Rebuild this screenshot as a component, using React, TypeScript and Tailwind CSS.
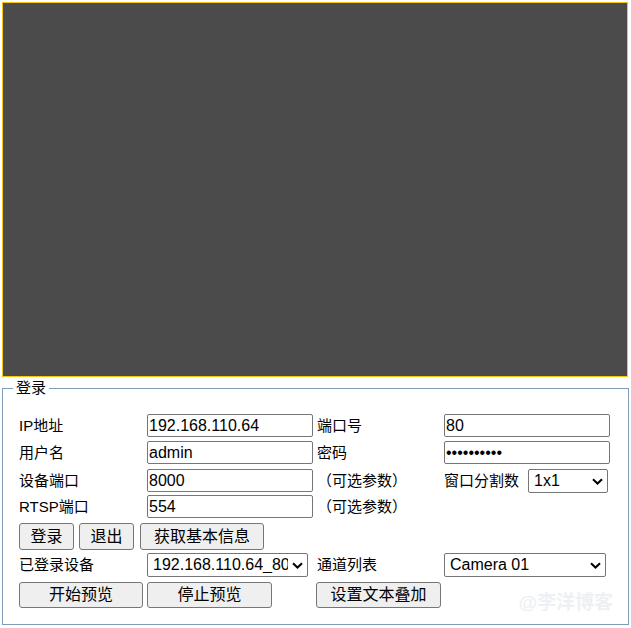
import type { ReactNode } from "react";

const FONT = "font-['Liberation_Sans','Noto_Sans_CJK_SC',sans-serif]";

function Field({ value, type = "text" }: { value: string; type?: string }) {
  return (
    <input
      type={type}
      defaultValue={value}
      readOnly
      className="h-[23px] w-[166px] rounded-[2px] border border-[#767676] bg-white pl-[1px] text-[16px] leading-none text-black outline-none"
    />
  );
}

function Sel({ w, value }: { w: string; value: string }) {
  return (
    <div className={`relative h-[24px] ${w}`}>
      <select
        defaultValue={value}
        className="h-full w-full appearance-none rounded-[2px] border border-[#767676] bg-white pl-[5px] pr-[19px] text-[16px] leading-none text-black outline-none"
      >
        <option>{value}</option>
      </select>
      <svg
        className="pointer-events-none absolute right-[5px] top-[9px]"
        width="11"
        height="7"
        viewBox="0 0 11 7"
      >
        <path d="M1 1.2l4.5 4.3L10 1.2" stroke="#000" strokeWidth="2" fill="none" />
      </svg>
    </div>
  );
}

function Btn({ w, children }: { w: string; children: ReactNode }) {
  return (
    <button
      className={`h-full rounded-[3px] border border-[#767676] bg-[#efefef] text-[16px] leading-none text-black ${w}`}
    >
      {children}
    </button>
  );
}

function Label({ children }: { children: ReactNode }) {
  return <span className="text-[15px] leading-none">{children}</span>;
}

export default function App() {
  return (
    <div className={`p-[2px] text-black ${FONT}`}>
      <div className="h-[375px] w-[626px] border border-[#f6c413] bg-[#4b4b4b]" />

      <fieldset className="relative w-[627px] border border-[#7f9db9] px-0 pb-[16px]">
        <legend className="ml-[10px] px-[3px] text-[15px] leading-[22px]">登录</legend>

        <div className="flex flex-col pl-[16px] pt-[15px]">
          <div className="flex h-[23px] items-center">
            <div className="w-[128px]"><Label>IP地址</Label></div>
            <div className="w-[170px]"><Field value="192.168.110.64" /></div>
            <div className="w-[127px]"><Label>端口号</Label></div>
            <Field value="80" />
          </div>

          <div className="mt-[4px] flex h-[23px] items-center">
            <div className="w-[128px]"><Label>用户名</Label></div>
            <div className="w-[170px]"><Field value="admin" /></div>
            <div className="w-[127px]"><Label>密码</Label></div>
            <Field value="abcd123456" type="password" />
          </div>

          <div className="mt-[4px] flex h-[25px] items-center">
            <div className="w-[128px]"><Label>设备端口</Label></div>
            <div className="w-[170px]"><Field value="8000" /></div>
            <div className="w-[127px]"><Label>（可选参数）</Label></div>
            <div className="w-[84px]"><Label>窗口分割数</Label></div>
            <Sel w="w-[80px]" value="1x1" />
          </div>

          <div className="mt-[2px] flex h-[23px] items-center">
            <div className="w-[128px]"><Label>RTSP端口</Label></div>
            <div className="w-[170px]"><Field value="554" /></div>
            <div className="w-[127px]"><Label>（可选参数）</Label></div>
          </div>

          <div className="mt-[5px] flex h-[27px] items-stretch gap-[5px]">
            <Btn w="w-[55px]">登录</Btn>
            <Btn w="w-[55px]">退出</Btn>
            <Btn w="ml-[1px] w-[124px]">获取基本信息</Btn>
          </div>

          <div className="mt-[3px] flex h-[24px] items-center">
            <div className="w-[128px]"><Label>已登录设备</Label></div>
            <div className="w-[170px]"><Sel w="w-[161px]" value="192.168.110.64_80" /></div>
            <div className="w-[127px]"><Label>通道列表</Label></div>
            <Sel w="w-[162px]" value="Camera 01" />
          </div>

          <div className="mt-[5px] flex h-[26px] items-stretch">
            <div className="flex w-[128px]"><Btn w="w-[124px]">开始预览</Btn></div>
            <div className="flex w-[170px]"><Btn w="w-[125px]">停止预览</Btn></div>
            <div className="-ml-[1px] flex"><Btn w="w-[125px]">设置文本叠加</Btn></div>
          </div>
        </div>

        <span className="pointer-events-none absolute bottom-[12px] right-[15px] text-[19px] font-bold leading-none text-[#edf1f5]">
          @李洋博客
        </span>
      </fieldset>
    </div>
  );
}
